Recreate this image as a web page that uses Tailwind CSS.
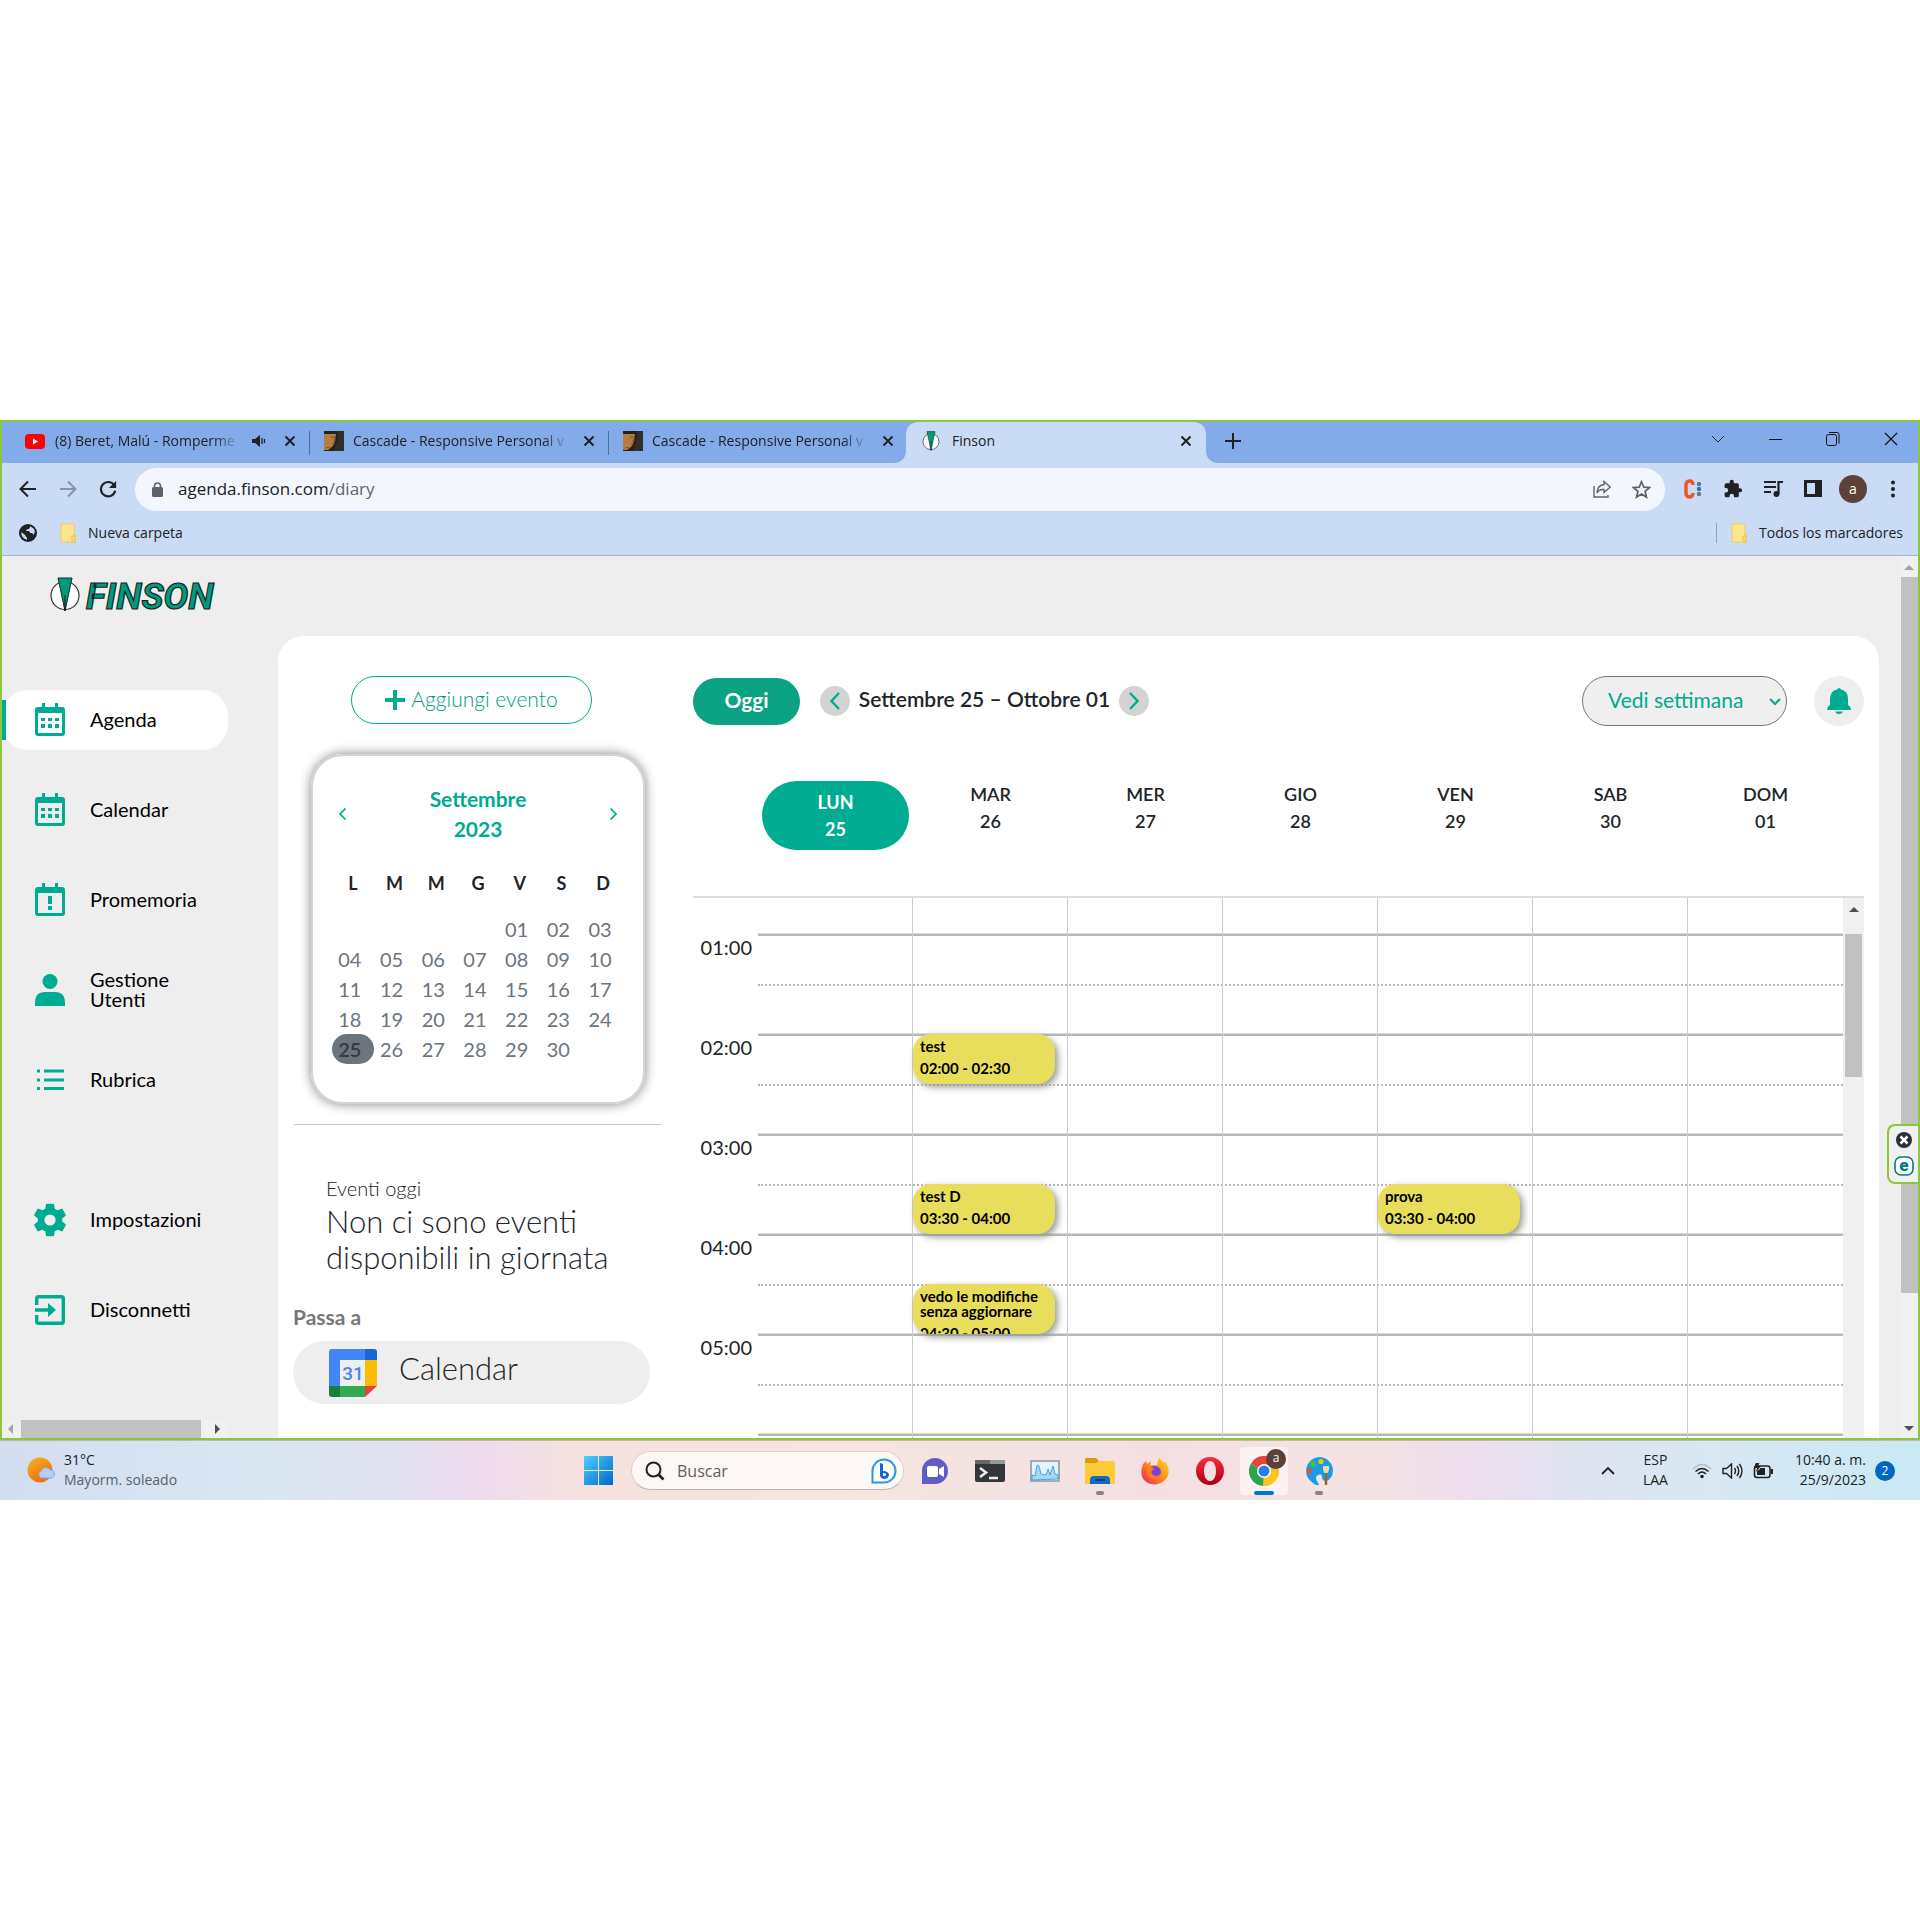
<!DOCTYPE html>
<html lang="it">
<head>
<meta charset="utf-8">
<title>Finson</title>
<script src="https://cdn.jsdelivr.net/npm/@tailwindcss/browser@4"></script>
</head>
<body class="flex h-screen flex-col overflow-hidden bg-white py-[420px] font-[family-name:Open_Sans,sans-serif] text-[#202124]">
<svg class="hidden">
  <symbol id="cal" viewBox="0 0 30 34"><path fill="#00ac91" fill-rule="evenodd" d="M7 0h3v4h10V0h3v4h4q3 0 3 3v23q0 3-3 3H3q-3 0-3-3V7q0-3 3-3h4zM3 10v20h24V10z"/></symbol>
  <symbol id="calDots" viewBox="0 0 30 34"><use href="#cal"/><path fill="#00ac91" d="M6 15h4v3H6zm7 0h4v3h-4zm7 0h4v3h-4zM6 21h4v4H6zm7 0h4v4h-4zm7 0h4v4h-4z"/></symbol>
  <symbol id="close" viewBox="0 0 12 12"><path d="M1.500 1.500l9 9M10.500 1.500l-9 9" stroke="#202124" stroke-width="2"/></symbol>
  <symbol id="folder" viewBox="0 0 16 20"><path d="M1 1h13v12h2v6H1z" fill="#ffe590" stroke="#f2cc4e"/><path d="M12 13h3v6h-3z" fill="#ffdf75" stroke="#e5b93c" stroke-width=".8"/></symbol>
  <symbol id="cascade" viewBox="0 0 20 20"><path fill="#222" d="M0 0h20v20H0z"/><path fill="#b67d3e" d="M0 3h12l-1 6-2 6-5 4H0z"/><path d="M7 6h5M9 9h3M8 13h3M2 17l4-1" stroke="#7a5128"/><path d="M14 0h6v20H9q5-6 5-20" fill="#302d2b"/></symbol>
  <symbol id="emblem" viewBox="0 0 30 35"><ellipse cx="15" cy="18.500" rx="14" ry="14" fill="#fff" stroke="#333" stroke-width="1.200"/><path d="M8 1h14l-7 33z" fill="#009b7c" stroke="#1a2a26"/><path d="M15 18v16" stroke="#111"/></symbol>
</svg>

<div class="flex min-h-0 flex-1 flex-col border-2 border-[#8cc63f]">
  <!-- tab strip -->
  <div class="flex h-[41px] shrink-0 items-stretch bg-[#84abe9] text-sm">
    <div class="flex w-[307px] items-center pb-[3px] pl-[23px]">
      <svg class="h-[15px] w-5 shrink-0" viewBox="0 0 20 15"><rect width="20" height="15" rx="4" fill="#f00"/><path d="M8 4.500v6l5-3z" fill="#fff"/></svg>
      <span class="ml-[10px] w-[186px] shrink-0 whitespace-nowrap [mask-image:linear-gradient(to_right,black_85%,transparent)]">(8) Beret, Malú - Romperme</span>
      <svg class="ml-[11px] h-[14px] w-[14px] shrink-0" viewBox="0 0 14 14"><path d="M0 5h3l5-4v12L3 9H0z" fill="#202124"/><path d="M10 4v6M12.500 5v4" stroke="#202124" stroke-width="1.300"/></svg>
      <button class="ml-[18px]" aria-label="Cerrar"><svg class="size-3"><use href="#close"/></svg></button>
    </div>
    <div class="my-auto h-6 w-px bg-[#4d6da5]"></div>
    <div class="flex w-[298px] items-center pb-[3px] pl-[14px]">
      <svg class="size-5 shrink-0"><use href="#cascade"/></svg>
      <span class="ml-[9px] w-[216px] shrink-0 whitespace-nowrap [mask-image:linear-gradient(to_right,black_88%,transparent)]">Cascade - Responsive Personal v</span>
      <button class="ml-[14px]" aria-label="Cerrar"><svg class="size-3"><use href="#close"/></svg></button>
    </div>
    <div class="my-auto h-6 w-px bg-[#4d6da5]"></div>
    <div class="w-[297px] bg-[#cadbf5]">
      <div class="flex h-full items-center rounded-br-xl bg-[#84abe9] pb-[3px] pl-[14px]">
        <svg class="size-5 shrink-0"><use href="#cascade"/></svg>
        <span class="ml-[9px] w-[216px] shrink-0 whitespace-nowrap [mask-image:linear-gradient(to_right,black_88%,transparent)]">Cascade - Responsive Personal v</span>
        <button class="ml-[14px]" aria-label="Cerrar"><svg class="size-3"><use href="#close"/></svg></button>
      </div>
    </div>
    <div class="flex w-[300px] items-center rounded-t-xl bg-[#cadbf5] pb-[3px] pl-4">
      <svg class="h-5 w-[18px]"><use href="#emblem"/></svg>
      <span class="ml-3">Finson</span>
      <button class="mr-[14px] ml-auto" aria-label="Cerrar"><svg class="size-3"><use href="#close"/></svg></button>
    </div>
    <div class="flex-1 bg-[#cadbf5]"><div class="flex h-full items-center rounded-bl-xl bg-[#84abe9] pb-[3px]">
      <button class="ml-[19px]" aria-label="Nueva pestaña"><svg class="size-4" viewBox="0 0 16 16"><path d="M8 0v16M0 8h16" stroke="#202124" stroke-width="2"/></svg></button>
      <div class="mb-1 ml-auto flex items-center gap-11 pr-5">
        <svg class="h-4 w-[14px]" viewBox="0 0 14 16"><path d="M1 5l6 6 6-6" fill="none" stroke="#222"/></svg>
        <svg class="h-4 w-[13px]" viewBox="0 0 13 16"><path d="M0 8.500h13" stroke="#111"/></svg>
        <svg class="h-4 w-[14px]" viewBox="0 0 14 16"><rect x=".5" y="3.500" width="10" height="11" rx="2" fill="none" stroke="#111"/><path d="M3 1.500h8q2 0 2 2v9" fill="none" stroke="#111"/></svg>
        <svg class="h-4 w-[14px]" viewBox="0 0 14 16"><path d="M1 2l12 12M13 2L1 14" stroke="#111" stroke-width="1.200"/></svg>
      </div>
    </div></div>
  </div>
  <!-- toolbar -->
  <div class="flex h-[53px] shrink-0 items-center bg-[#cadbf5] pb-px pl-[17px]">
    <div class="flex items-center gap-[22px]">
      <svg class="size-[18px]" viewBox="0 0 18 18"><path d="M17 9H2M9 1.500L1.500 9 9 16.500" fill="none" stroke="#202124" stroke-width="2"/></svg>
      <svg class="size-[18px]" viewBox="0 0 18 18"><path d="M1 9h15M9 1.500L16.500 9 9 16.500" fill="none" stroke="#8292ad" stroke-width="2"/></svg>
      <svg class="size-[18px]" viewBox="0 0 20 20"><path d="M17 6A8 8 0 1 0 18 12" fill="none" stroke="#202124" stroke-width="2.400"/><path d="M19 1v8h-8z" fill="#202124"/></svg>
    </div>
    <div class="ml-[18px] flex h-[43px] flex-1 items-center rounded-full bg-[#f3f7fd] pr-[14px] pl-[17px]">
      <svg class="h-[15px] w-[11px]" viewBox="0 0 11 15"><rect y="5" width="11" height="10" rx="1.500" fill="#5f6368"/><path d="M2.500 6V4a3 3 0 0 1 6 0v2" fill="none" stroke="#5f6368" stroke-width="1.600"/></svg>
      <span class="ml-[15px] text-[17px]">agenda.finson.com<span class="text-[#5f6368]">/diary</span></span>
      <svg class="ml-auto h-[18px] w-[18px]" viewBox="0 0 18 18"><path d="M1 6v11h14v-2" fill="none" stroke="#5f6368" stroke-width="1.400"/><path d="M11 1.500L17.200 7 11 12.500V9.500Q6 9 4 13 4.500 5 11 4.500z" fill="none" stroke="#5f6368" stroke-width="1.400"/></svg>
      <svg class="ml-[21px] h-[19px] w-[19px]" viewBox="0 0 20 20"><path d="M10 1.800l2.400 5.700 6 .5-4.600 4 1.400 6L10 14.800 4.800 18l1.400-6-4.600-4 6-.5z" fill="none" stroke="#5f6368" stroke-width="1.800"/></svg>
    </div>
    <div class="flex items-center gap-5 pr-[15px] pl-[18px]">
      <svg class="size-5" viewBox="0 0 20 20"><path d="M10 6Q10 2 6.500 2T3 6v8q0 4 3.500 4T10 14" fill="none" stroke="#f4511e" stroke-width="3.400"/><circle cx="16" cy="5" r="2.200" fill="#6b7280"/><circle cx="16" cy="10" r="2.200" fill="#1a73e8"/><circle cx="16" cy="15" r="2.200" fill="#6b7280"/></svg>
      <svg class="size-5" viewBox="0 0 24 24"><path fill="#202124" d="M20.500 11H19V7a2 2 0 0 0-2-2h-4V3.500a2.500 2.500 0 0 0-5 0V5H4a2 2 0 0 0-2 2v3.800h1.500a2.700 2.700 0 0 1 0 5.400H2V20a2 2 0 0 0 2 2h3.800v-1.500a2.700 2.700 0 0 1 5.400 0V22H17a2 2 0 0 0 2-2v-4h1.500a2.500 2.500 0 0 0 0-5z"/></svg>
      <svg class="size-5" viewBox="0 0 20 20"><path d="M1 3h12M1 8h12M1 13h7M15.500 15V3H20" fill="none" stroke="#202124" stroke-width="2.200"/><circle cx="13.500" cy="15" r="3" fill="#202124"/></svg>
      <svg class="size-5" viewBox="0 0 20 20"><path d="M1 1h18v17H1zM4 4v11h8V4z" fill="#202124" fill-rule="evenodd"/></svg>
      <span class="-mx-1 flex size-7 items-center justify-center rounded-full bg-[#5d4037] text-sm text-white">a</span>
      <svg class="h-[18px] w-5" viewBox="0 0 20 18"><circle cx="10" cy="2.500" r="2" fill="#202124"/><circle cx="10" cy="9" r="2" fill="#202124"/><circle cx="10" cy="15.500" r="2" fill="#202124"/></svg>
    </div>
  </div>
  <!-- bookmarks bar -->
  <div class="flex h-10 shrink-0 items-center border-b border-[#9db2d6] bg-[#cadbf5] pr-[15px] pb-[6px] pl-[17px] text-sm">
    <svg class="size-[18px]" viewBox="0 0 18 18"><circle cx="9" cy="9" r="9" fill="#202124"/><path d="M11 2.200q0 3-2.500 3Q7 5.200 7 7h2.500q1.500 0 1.500 2h1.500q1.500 0 2 2 1.300-1.600 1.300-4Q15 3.800 11 2.200M2.300 8q-.3 6.300 5.700 7.800v-2.300q-1.500-.5-1.500-2z" fill="#cadbf5"/></svg>
    <svg class="ml-[23px] h-5 w-4"><use href="#folder"/></svg>
    <a href="#" class="ml-3">Nueva carpeta</a>
    <div class="ml-auto h-5 w-px bg-[#8f9fbd]"></div>
    <svg class="ml-[14px] h-5 w-4"><use href="#folder"/></svg>
    <a href="#" class="ml-3">Todos los marcadores</a>
  </div>

  <!-- web page -->
  <div class="relative flex min-h-0 flex-1 bg-[#eeeeee] font-[family-name:Lato,sans-serif]">
    <aside class="flex w-[226px] shrink-0 flex-col text-xl leading-5 text-black">
      <a href="#" class="mt-[21px] ml-[46px]" aria-label="Finson">
        <svg class="h-10 w-[172px]" viewBox="0 0 172 40"><use href="#emblem" x="2" y="0" width="30" height="35"/><text x="38" y="32" font-family="Roboto" font-weight="700" font-style="italic" font-size="37" fill="#009b7c" stroke="#14231f" stroke-width="1.200">FINSON</text></svg>
      </a>
      <nav class="mt-[73px] flex flex-col gap-[30px]">
        <a href="#" class="relative flex h-[60px] items-center rounded-[26px] bg-white pl-[33px]"><span class="absolute top-[10px] left-0 h-10 w-1 bg-[#00ac91]"></span><svg class="h-[34px] w-[30px]"><use href="#calDots"/></svg><span class="ml-[25px] pb-[3px]">Agenda</span></a>
        <a href="#" class="flex h-[60px] items-center pl-[33px]"><svg class="h-[34px] w-[30px]"><use href="#calDots"/></svg><span class="ml-[25px] pb-[3px]">Calendar</span></a>
        <a href="#" class="flex h-[60px] items-center pl-[33px]"><svg class="h-[34px] w-[30px]" viewBox="0 0 30 34"><use href="#cal"/><path d="M13 13h4v8h-4zm0 10h4v4h-4z" fill="#00ac91"/></svg><span class="ml-[25px] pb-[3px]">Promemoria</span></a>
        <a href="#" class="flex h-[60px] items-center pl-[33px]"><svg class="h-8 w-[30px]" viewBox="0 0 30 32"><circle cx="15" cy="7.500" r="7.500" fill="#00ac91"/><path d="M0 32v-3q0-11 10-11h10q10 0 10 11v3z" fill="#00ac91"/></svg><span class="ml-[25px] pb-[3px]">Gestione<br>Utenti</span></a>
        <a href="#" class="flex h-[60px] items-center pl-[33px]"><svg class="h-[22px] w-[30px]" viewBox="0 0 30 22"><path d="M2 2h3M9 2h20M2 11h3M9 11h20M2 19.500h3M9 19.500h20" stroke="#00ac91" stroke-width="3.200"/></svg><span class="ml-[25px] pb-[3px]">Rubrica</span></a>
        <a href="#" class="mt-[50px] flex h-[60px] items-center pl-[31px]"><svg class="size-[34px]" viewBox="2 2 20 20"><path fill="#00ac91" d="M19.140 12.940c.04-.3.060-.61.060-.94 0-.32-.02-.64-.07-.94l2.030-1.580a.49.49 0 0 0 .12-.61l-1.920-3.320a.49.49 0 0 0-.59-.22l-2.390.96a7 7 0 0 0-1.620-.94l-.36-2.540a.48.48 0 0 0-.48-.41h-3.840a.48.48 0 0 0-.47.41l-.36 2.540a7.300 7.300 0 0 0-1.620.94l-2.390-.96a.48.48 0 0 0-.59.220L2.740 8.870a.47.47 0 0 0 .12.610l2.030 1.580a6.500 6.500 0 0 0 0 1.880l-2.030 1.580a.49.49 0 0 0-.12.610l1.920 3.320c.12.220.37.290.59.220l2.390-.96c.5.380 1.030.7 1.620.94l.36 2.540c.05.240.24.410.48.410h3.840c.24 0 .44-.17.470-.41l.36-2.540a7 7 0 0 0 1.620-.94l2.390.96c.22.080.47 0 .59-.22l1.920-3.320a.47.47 0 0 0-.12-.61zM12 15.300a3.300 3.300 0 1 1 0-6.600 3.300 3.300 0 0 1 0 6.600z"/></svg><span class="ml-[23px] pb-[3px]">Impostazioni</span></a>
        <a href="#" class="flex h-[60px] items-center pl-[33px]"><svg class="size-[30px]" viewBox="0 0 30 30"><path d="M1.700 10V3.500q0-1.800 1.800-1.800h23q1.800 0 1.800 1.800v23q0 1.800-1.800 1.800h-23q-1.800 0-1.800-1.800V20" fill="none" stroke="#00ac91" stroke-width="3.400"/><path d="M0 13.300h13V8l8 7-8 7v-5.300H0z" fill="#00ac91"/></svg><span class="ml-[25px] pb-[3px]">Disconnetti</span></a>
      </nav>
      <div class="mt-auto flex h-[18px] shrink-0 items-center bg-[#f0f0f0]">
        <svg class="ml-[6px] h-[10px] w-[5px]"><path d="M5 0v10L0 5z" fill="#a3a3a3"/></svg>
        <div class="ml-2 h-full w-[180px] bg-[#c1c1c1]"></div>
        <svg class="ml-[14px] h-[10px] w-[5px]"><path d="M0 0v10l5-5z" fill="#505050"/></svg>
      </div>
    </aside>

    <main class="mt-20 mr-[21px] ml-[50px] flex min-w-0 flex-1 overflow-hidden rounded-t-[25px] bg-white pr-[15px]">
      <section class="w-[415px] shrink-0 pt-10 pl-[15px]">
        <button class="ml-[58px] flex h-12 w-[241px] items-center justify-center rounded-full border border-[#00a98f] text-[21px] font-light text-[#009a82]"><svg class="mr-[6px] size-5" viewBox="0 0 20 20"><path d="M10 0v20M0 10h20" stroke="#00ac91" stroke-width="4"/></svg><span class="pb-[2px]">Aggiungi evento</span></button>
        <div class="mt-[30px] ml-[18px] h-[350px] w-[334px] rounded-[32px] border-2 border-[#d3d3d3] px-[19px] pt-7 shadow-[0_0_12px_#808080]">
          <div class="flex items-center justify-between px-[7px] text-[21px] leading-[30px] font-bold text-[#00ac91]">
            <button aria-label="Mese precedente"><svg class="h-3 w-[7px]" viewBox="0 0 7 12"><path d="M6.500.5L1 6l5.500 5.500" fill="none" stroke="#00ac91" stroke-width="1.600"/></svg></button>
            <div class="text-center">Settembre<br>2023</div>
            <button aria-label="Mese successivo"><svg class="h-3 w-[7px]" viewBox="0 0 7 12"><path d="M.5.5L6 6 .5 11.500" fill="none" stroke="#00ac91" stroke-width="1.600"/></svg></button>
          </div>
          <table class="mt-6 w-[292px] table-fixed text-center text-xl leading-[30px] text-[#6c757d]">
            <thead><tr class="text-lg leading-[30px] text-[#212529]"><th>L</th><th>M</th><th>M</th><th>G</th><th>V</th><th>S</th><th>D</th></tr><tr class="h-4"></tr></thead>
            <tbody>
              <tr><td></td><td></td><td></td><td></td><td class="pr-[6px]">01</td><td class="pr-[6px]">02</td><td class="pr-[6px]">03</td></tr>
              <tr><td class="pr-[6px]">04</td><td class="pr-[6px]">05</td><td class="pr-[6px]">06</td><td class="pr-[6px]">07</td><td class="pr-[6px]">08</td><td class="pr-[6px]">09</td><td class="pr-[6px]">10</td></tr>
              <tr><td class="pr-[6px]">11</td><td class="pr-[6px]">12</td><td class="pr-[6px]">13</td><td class="pr-[6px]">14</td><td class="pr-[6px]">15</td><td class="pr-[6px]">16</td><td class="pr-[6px]">17</td></tr>
              <tr><td class="pr-[6px]">18</td><td class="pr-[6px]">19</td><td class="pr-[6px]">20</td><td class="pr-[6px]">21</td><td class="pr-[6px]">22</td><td class="pr-[6px]">23</td><td class="pr-[6px]">24</td></tr>
              <tr><td class="rounded-full bg-[#6c757d] pr-[6px] font-semibold text-[#343a40]">25</td><td class="pr-[6px]">26</td><td class="pr-[6px]">27</td><td class="pr-[6px]">28</td><td class="pr-[6px]">29</td><td class="pr-[6px]">30</td><td></td></tr>
            </tbody>
          </table>
        </div>
        <hr class="mt-5 ml-px w-[367px] border-[#c5c5c5]">
        <div class="mt-12 ml-[33px] font-light text-[#212529]">
          <p class="text-xl leading-[30px]">Eventi oggi</p>
          <p class="text-[31px] leading-9 whitespace-nowrap">Non ci sono eventi<br>disponibili in giornata</p>
        </div>
        <p class="mt-[27px] text-[21px] leading-[30px] font-bold text-[#777]">Passa a</p>
        <a href="#" class="mt-[9px] flex h-[63px] w-[357px] items-center rounded-full bg-[#eee] pl-9 text-[31px] font-light text-[#212529]">
          <svg class="size-12" viewBox="0 0 48 48"><path d="M0 37V3q0-3 3-3h33v11H11v26z" fill="#4285f4"/><path d="M36 0h9q3 0 3 3v8H36z" fill="#1967d2"/><path d="M36 11h12v26H36z" fill="#fbbc04"/><path d="M0 37h11v11H3q-3 0-3-3z" fill="#188038"/><path d="M11 37h25v11H11z" fill="#34a853"/><path d="M36 37h12L36 48z" fill="#ea4335"/><text x="24" y="31" text-anchor="middle" font-family="Roboto" font-weight="500" font-size="19" fill="#4285f4">31</text></svg>
          <span class="ml-[22px] pb-2">Calendar</span>
        </a>
      </section>

      <section class="flex min-w-0 flex-1 flex-col pt-10 text-[#212529]">
        <div class="flex h-[50px] shrink-0 items-center text-xl">
          <button class="h-[47px] w-[107px] rounded-full bg-[#0ba284] pb-[2px] text-[21px] font-bold text-white">Oggi</button>
          <button class="ml-5 flex size-[30px] items-center justify-center rounded-full bg-[#d3d3d3]" aria-label="Precedente"><svg class="h-[18px] w-[10px]" viewBox="0 0 10 18"><path d="M9 1L1.500 9 9 17" fill="none" stroke="#00ac91" stroke-width="2.400"/></svg></button>
          <h2 class="w-[269px] pb-1 text-center text-[21px] font-semibold">Settembre 25 – Ottobre 01</h2>
          <button class="flex size-[30px] items-center justify-center rounded-full bg-[#d3d3d3]" aria-label="Successivo"><svg class="h-[18px] w-[10px]" viewBox="0 0 10 18"><path d="M1 1l7.500 8L1 17" fill="none" stroke="#00ac91" stroke-width="2.400"/></svg></button>
          <div class="relative ml-auto">
            <select aria-label="Vista" class="h-[50px] w-[205px] appearance-none rounded-full border border-[#767676] bg-[#efefef] pb-[2px] pl-[25px] text-[21px] text-[#00a98f]"><option>Vedi settimana</option></select>
            <svg class="pointer-events-none absolute top-[22px] right-[6px] h-2 w-3" viewBox="0 0 12 8"><path d="M1 1l5 5 5-5" fill="none" stroke="#00ac91" stroke-width="2.200"/></svg>
          </div>
          <button class="ml-[27px] flex size-[50px] items-center justify-center rounded-full bg-[#eee]" aria-label="Notifiche"><svg class="h-[26px] w-6" viewBox="0 0 24 26"><path d="M10 1.500q2-3 4 0 6.500 1 7 9V17q2.500 1 3 5H0q.5-4 3-5v-6.500q.5-8 7-9zM8 23.500h8q-1 2.500-4 2.500t-4-2.500" fill="#00ac91"/></svg></button>
        </div>
        <div class="mt-[55px] grid h-[115px] shrink-0 grid-cols-7 pr-[21px] pl-[65px] text-center text-lg leading-[27px] font-semibold">
          <div class="mx-1 h-[69px] rounded-full bg-[#00ac91] pt-2 font-bold text-white">LUN<br>25</div>
          <div>MAR<br>26</div><div>MER<br>27</div><div>GIO<br>28</div><div>VEN<br>29</div><div>SAB<br>30</div><div>DOM<br>01</div>
        </div>
        <div class="flex min-h-0 flex-1 border-t-2 border-[#ddd]">
          <div class="w-[65px] shrink-0 overflow-hidden pt-9 pr-[6px] text-right text-xl leading-[26px]">
            <div class="h-[100px]">01:00</div><div class="h-[100px]">02:00</div><div class="h-[100px]">03:00</div><div class="h-[100px]">04:00</div><div class="h-[100px]">05:00</div>
          </div>
          <div class="relative min-w-0 flex-1 overflow-hidden">
            <div class="pt-9">
              <div class="h-[100px] border-t-2 border-[#b7b7b7] pt-12 shadow-[0_-1px_0_#ddd]"><div class="border-t-2 border-dotted border-[#b7b7b7]"></div></div>
              <div class="h-[100px] border-t-2 border-[#b7b7b7] pt-12 shadow-[0_-1px_0_#ddd]"><div class="border-t-2 border-dotted border-[#b7b7b7]"></div></div>
              <div class="h-[100px] border-t-2 border-[#b7b7b7] pt-12 shadow-[0_-1px_0_#ddd]"><div class="border-t-2 border-dotted border-[#b7b7b7]"></div></div>
              <div class="h-[100px] border-t-2 border-[#b7b7b7] pt-12 shadow-[0_-1px_0_#ddd]"><div class="border-t-2 border-dotted border-[#b7b7b7]"></div></div>
              <div class="h-[100px] border-t-2 border-[#b7b7b7] pt-12 shadow-[0_-1px_0_#ddd]"><div class="border-t-2 border-dotted border-[#b7b7b7]"></div></div>
              <div class="h-[100px] border-t-2 border-[#b7b7b7] shadow-[0_-1px_0_#ddd]"></div>
            </div>
            <div class="absolute inset-0 grid grid-cols-7 divide-x divide-[#ccc] text-[15px] leading-[15px] font-bold text-black">
              <div></div>
              <div class="relative">
                <article class="absolute top-[136px] right-3 left-0 h-[50px] overflow-hidden rounded-[18px] bg-[#e8de5b] pt-[5px] pl-[7px] shadow-[3px_3px_7px_#999]">test<div class="mt-[7px]">02:00 - 02:30</div></article>
                <article class="absolute top-[286px] right-3 left-0 h-[50px] overflow-hidden rounded-[18px] bg-[#e8de5b] pt-[5px] pl-[7px] shadow-[3px_3px_7px_#999]">test D<div class="mt-[7px]">03:30 - 04:00</div></article>
                <article class="absolute top-[386px] right-3 left-0 h-[50px] overflow-hidden rounded-[18px] bg-[#e8de5b] pt-[5px] pl-[7px] shadow-[3px_3px_7px_#999]">vedo le modifiche<br>senza aggiornare<div class="mt-[7px]">04:30 - 05:00</div></article>
              </div>
              <div></div><div></div>
              <div class="relative">
                <article class="absolute top-[286px] right-3 left-0 h-[50px] overflow-hidden rounded-[18px] bg-[#e8de5b] pt-[5px] pl-[7px] shadow-[3px_3px_7px_#999]">prova<div class="mt-[7px]">03:30 - 04:00</div></article>
              </div>
              <div></div><div></div>
            </div>
          </div>
          <div class="flex w-[21px] shrink-0 flex-col items-center bg-[#f0f0f0] pt-[9px]">
            <svg class="h-[5px] w-[10px]"><path d="M0 5h10L5 0z" fill="#505050"/></svg>
            <div class="mt-[22px] h-[143px] w-[17px] bg-[#c1c1c1]"></div>
          </div>
        </div>
      </section>
    </main>

    <div class="flex w-[18px] shrink-0 flex-col items-center bg-[#f0f0f0] pt-[9px]">
      <svg class="h-[5px] w-[10px]"><path d="M0 5h10L5 0z" fill="#a3a3a3"/></svg>
      <div class="mt-[7px] h-[716px] w-[17px] bg-[#c1c1c1]"></div>
      <svg class="mt-auto mb-[7px] h-[5px] w-[10px]"><path d="M0 0h10L5 5z" fill="#505050"/></svg>
    </div>
    <div class="absolute top-[568px] right-0 flex h-[60px] w-[31px] flex-col items-center justify-center gap-2 rounded-l-lg border-2 border-r-0 border-[#8cc63f] bg-[#f0f0f0]">
      <svg class="size-4" viewBox="0 0 16 16"><circle cx="8" cy="8" r="8" fill="#2b2f38"/><path d="M4.500 4.500l7 7M11.500 4.500l-7 7" stroke="#fff" stroke-width="2.600"/></svg>
      <svg class="size-5" viewBox="0 0 20 20"><rect x="1" y="1" width="18" height="18" rx="6" fill="#fff" stroke="#007c85" stroke-width="1.600"/><text x="10" y="14.500" text-anchor="middle" font-family="Roboto" font-weight="900" font-size="17" fill="#007c85">e</text></svg>
    </div>
  </div>
</div>

<!-- taskbar -->
<footer class="flex h-[60px] shrink-0 items-center border-t border-[#b9b6bd] bg-[linear-gradient(90deg,#d2def0_0%,#d9e7f3_14%,#e2e1f1_21%,#f0dbef_25%,#f5e2df_30%,#f5e4e0_45%,#f4e0e3_60%,#f5e2e2_71%,#eedef0_77%,#dfe4f1_82%,#d7e8f4_90%,#c9e9f4_100%)] pr-[25px] pl-[27px] text-[15px] leading-5">
  <svg class="h-7 w-[28px]" viewBox="0 0 28 28"><defs><linearGradient id="sun" x2=".6" y2="1"><stop stop-color="#f2b822"/><stop offset="1" stop-color="#f26a0c"/></linearGradient></defs><circle cx="13" cy="13" r="12.500" fill="url(#sun)"/><path d="M14 21a4 4 0 0 1 0-7 5 5 0 0 1 9-1 4 4 0 0 1 1 8z" fill="#b5cdf5" stroke="#86a8e8"/></svg>
  <div class="ml-[9px] w-[520px] pb-[2px] text-sm leading-5">31°C<br><span class="text-[#5b6069]">Mayorm. soleado</span></div>
  <svg class="size-[29px] shrink-0" viewBox="0 0 29 29"><defs><linearGradient id="w" x2="1" y2="1"><stop stop-color="#4cd0ff"/><stop offset="1" stop-color="#0067c8"/></linearGradient></defs><path d="M0 0h14v14H0zm15 0h14v14H15zM0 15h14v14H0zm15 0h14v14H15z" fill="url(#w)"/></svg>
  <label class="ml-[18px] flex h-[39px] w-[273px] shrink-0 items-center rounded-full border border-[#e3cfcf] border-b-[#c4b3b3] bg-[#fdf7f6] pr-[6px] pl-[13px]">
    <svg class="size-5 shrink-0" viewBox="0 0 20 20"><circle cx="8.500" cy="8.500" r="7" fill="none" stroke="#222" stroke-width="2"/><path d="M13.500 13.500l5 5" stroke="#222" stroke-width="2.600"/></svg>
    <input aria-label="Buscar" placeholder="Buscar" class="ml-3 min-w-0 flex-1 bg-transparent text-base placeholder:text-[#5f5f5f]">
    <svg class="size-[26px]" viewBox="0 0 26 26"><path d="M1.500 24.500V13A11.500 11.500 0 1 1 13 24.500z" fill="#fff" stroke="#2598e8" stroke-width="2"/><path d="M9 5l3 1v7q6 0 6 4.500-1 3.500-5 3.500-4-.5-4-4z" fill="#1565e0"/><path d="M12 15v3q3 0 3-1.500T12 15" fill="#fff"/></svg>
  </label>
  <div class="ml-[3px] flex items-center">
    <div class="flex h-12 w-[55px] items-center justify-center"><svg class="size-7" viewBox="0 0 28 28"><path d="M1 27V14A13 13 0 1 1 14 27z" fill="#615bc4"/><rect x="6" y="9" width="11" height="11" rx="2" fill="#fff"/><path d="M18 12l5-3v11l-5-3z" fill="#fff"/></svg></div>
    <div class="flex h-12 w-[55px] items-center justify-center"><svg class="h-[22px] w-[30px]" viewBox="0 0 30 22"><rect width="30" height="22" rx="2" fill="#333638"/><path d="M0 0h30v4H0z" fill="#999"/><path d="M0 0h15v4H0z" fill="#666"/><path d="M5 8l6 4.500L5 17M14 18h9" fill="none" stroke="#eee" stroke-width="2.600"/></svg></div>
    <div class="flex h-12 w-[55px] items-center justify-center"><svg class="h-[22px] w-[30px]" viewBox="0 0 30 22"><path d="M1 1h28v20H1z" fill="#e4f4fc" stroke="#8b99a4" stroke-width="1.600"/><path d="M2 20v-5l3 1 2-11 2 1 2 8 5 1 2-6 2 6 3-9 2 8 3 1v4z" fill="#a5d8f5" stroke="#2b95d5" stroke-width=".8"/></svg></div>
    <div class="relative flex h-12 w-[55px] items-center justify-center"><svg class="h-[26px] w-[30px]" viewBox="0 0 30 26"><path d="M0 2q0-2 2-2h9l3 3v4H0z" fill="#d99a00"/><path d="M0 5h11l3-2h14q2 0 2 2v21H0z" fill="#ffca3a"/><path d="M5 26v-4q0-4 4-4h12q4 0 4 4v4z" fill="#0f6cbd"/><path d="M10 22h10" stroke="#063f7a" stroke-width="2"/></svg><span class="absolute bottom-0 h-1 w-2 rounded-full bg-[#8a8183]"></span></div>
    <div class="flex h-12 w-[55px] items-center justify-center"><svg class="size-7" viewBox="0 0 28 28"><defs><linearGradient id="ff" x1="1" x2="0" y2="1"><stop stop-color="#ffe02e"/><stop offset=".5" stop-color="#ff8a16"/><stop offset="1" stop-color="#f5156c"/></linearGradient></defs><path d="M2 7l3-3 1 3 4-3-1 4 7 0 2-8q2 4 5 6l2-1q6 12-1 18-8 7-17 3Q-3 21 2 7" fill="url(#ff)"/><circle cx="14" cy="15" r="6" fill="#7a3fe0"/><path d="M5 12q4-3 9 0-5 1-3 5 4 4 8 0-1 6-8 5-6-2-6-10" fill="#ff7b1c"/></svg></div>
    <div class="flex h-12 w-[55px] items-center justify-center"><svg class="size-7" viewBox="0 0 28 28"><defs><linearGradient id="op" x2="0" y2="1"><stop stop-color="#ff2a3c"/><stop offset="1" stop-color="#a70014"/></linearGradient></defs><path fill-rule="evenodd" fill="url(#op)" d="M14 0a14 14 0 1 0 0 28 14 14 0 0 0 0-28m0 4c4 0 6 5 6 10s-2 10-6 10-6-5-6-10 2-10 6-10"/></svg></div>
    <div class="relative mx-[3px] flex size-12 items-center justify-center rounded bg-[#fcf2f3]"><svg class="size-[30px]" viewBox="0 0 30 30"><path d="M15 15L2 7.500A15 15 0 0 1 28 7.500z" fill="#ea4335"/><path d="M15 15v15A15 15 0 0 1 2 7.500z" fill="#2ea44f"/><path d="M15 15L28 7.500A15 15 0 0 1 14 30z" fill="#fcc31e"/><circle cx="15" cy="15" r="7" fill="#fff"/><circle cx="15" cy="15" r="5.500" fill="#2b7de9"/></svg><span class="absolute top-[2px] right-[2px] flex size-5 items-center justify-center rounded-full bg-[#5d4037] pb-px text-xs text-white">a</span><span class="absolute bottom-0 h-1 w-5 rounded-full bg-[#0078d4]"></span></div>
    <div class="relative flex h-12 w-[55px] items-center justify-center"><svg class="size-7" viewBox="0 0 28 28"><path d="M14 0a14 14 0 0 1 14 13q0 9-7 11-4 0-4-4t-4-2 0 8-5 0A14 14 0 0 1 14 0" fill="#1a9be8"/><circle cx="8" cy="7" r="2.800" fill="#4cc22e"/><circle cx="16" cy="4.500" r="2.600" fill="#ffc400"/><circle cx="4.500" cy="14" r="2.600" fill="#e8502a"/><path d="M21 14v14" stroke="#a15f22" stroke-width="2.400"/><path d="M18 9h6v4l-1.500 3h-3L18 13z" fill="#f0d9a8"/></svg><span class="absolute bottom-0 h-1 w-2 rounded-full bg-[#8a8183]"></span></div>
  </div>
  <div class="ml-auto flex items-center text-sm leading-5">
    <svg class="h-2 w-[14px]" viewBox="0 0 14 8"><path d="M1 7l6-6 6 6" fill="none" stroke="#222" stroke-width="1.800"/></svg>
    <div class="ml-7 pb-px text-center">ESP<br>LAA</div>
    <svg class="ml-6 h-4 w-[20px]" viewBox="0 0 20 16"><path d="M1 6q9-9 18 0" fill="none" stroke="#b4bcc6" stroke-width="1.600"/><path d="M3.500 8.500q6.500-6 13 0M6 11q4-4 8 0" fill="none" stroke="#222" stroke-width="1.600"/><circle cx="10" cy="13.500" r="1.800" fill="#222"/></svg>
    <svg class="ml-[10px] h-4 w-[21px]" viewBox="0 0 21 16"><path d="M1 5.500h3.500L9.500 1v14L4.500 10.500H1zM12.500 5q2 3 0 6M15 3q3.500 5 0 10M17.500 1q5 7 0 14" fill="none" stroke="#222" stroke-width="1.400"/></svg>
    <svg class="ml-[10px] h-4 w-[20px]" viewBox="0 0 20 16"><rect x="1.500" y="3" width="15.500" height="11.500" rx="2.500" fill="none" stroke="#222" stroke-width="1.600"/><path d="M4 8l3-2V5h5v7H4zM18 6h2v5h-2zM3-1h4L5 3h3L3 9l1-4H1z" fill="#222"/></svg>
    <div class="ml-[22px] pb-px text-right">10:40 a. m.<br>25/9/2023</div>
    <span class="ml-[9px] flex size-5 items-center justify-center rounded-full bg-[#0067c0] text-xs text-white">2</span>
  </div>
</footer>
</body>
</html>
